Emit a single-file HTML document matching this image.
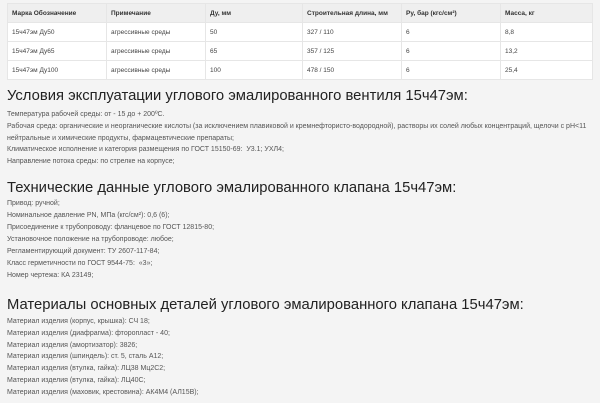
<!DOCTYPE html>
<html><head><meta charset="utf-8"><style>
body{margin:0;width:600px;height:403px;background:#f4f4f4;font-family:"Liberation Sans",sans-serif;overflow:hidden;position:relative}
table{position:absolute;left:7px;top:3px;width:586px;border-collapse:collapse;font-size:6.5px;color:#444}
td,th{border:1px solid #e6e6e6;height:18px;padding:0 0 0 4px;text-align:left;background:#fff}
th{background:#efefef;font-weight:bold;color:#333}
h2{position:absolute;left:7px;margin:0;font-weight:normal;font-size:14.8px;color:#222;white-space:nowrap}
.p{position:absolute;left:7px;font-size:7px;color:#555;white-space:nowrap}
</style></head><body>
<table>
<tr><th style="width:94px">Марка Обозначение</th><th style="width:94px">Примечание</th><th style="width:92px">Ду, мм</th><th style="width:94px">Строительная длина, мм</th><th style="width:94px">Ру, бар (кгс/см²)</th><th>Масса, кг</th></tr>
<tr><td>15ч47эм Ду50</td><td>агрессивные среды</td><td>50</td><td>327 / 110</td><td>6</td><td>8,8</td></tr>
<tr><td>15ч47эм Ду65</td><td>агрессивные среды</td><td>65</td><td>357 / 125</td><td>6</td><td>13,2</td></tr>
<tr><td>15ч47эм Ду100</td><td>агрессивные среды</td><td>100</td><td>478 / 150</td><td>6</td><td>25,4</td></tr>
</table>
<h2 style="top:88px">Условия эксплуатации углового эмалированного вентиля 15ч47эм:</h2>
<div class="p" style="top:111px">Температура рабочей среды: от - 15 до + 200ºС.</div>
<div class="p" style="top:123px">Рабочая среда: органические и неорганические кислоты (за исключением плавиковой и кремнефтористо-водородной), растворы их солей любых концентраций, щелочи с рН&lt;11</div>
<div class="p" style="top:135px">нейтральные и химические продукты, фармацевтические препараты;</div>
<div class="p" style="top:146px">Климатическое исполнение и категория размещения по ГОСТ 15150-69:&nbsp; У3.1; УХЛ4;</div>
<div class="p" style="top:158px">Направление потока среды: по стрелке на корпусе;</div>
<h2 style="top:180px">Технические данные углового эмалированного клапана 15ч47эм:</h2>
<div class="p" style="top:200px">Привод: ручной;</div>
<div class="p" style="top:212px">Номинальное давление PN, МПа (кгс/см²): 0,6 (6);</div>
<div class="p" style="top:224px">Присоединение к трубопроводу: фланцевое по ГОСТ 12815-80;</div>
<div class="p" style="top:236px">Установочное положение на трубопроводе: любое;</div>
<div class="p" style="top:248px">Регламентирующий документ: ТУ 2607-117-84;</div>
<div class="p" style="top:260px">Класс герметичности по ГОСТ 9544-75:&nbsp; «3»;</div>
<div class="p" style="top:272px">Номер чертежа: КА 23149;</div>
<h2 style="top:297px">Материалы основных деталей углового эмалированного клапана 15ч47эм:</h2>
<div class="p" style="top:318px">Материал изделия (корпус, крышка): СЧ 18;</div>
<div class="p" style="top:330px">Материал изделия (диафрагма): фторопласт - 40;</div>
<div class="p" style="top:342px">Материал изделия (амортизатор): 3826;</div>
<div class="p" style="top:353px">Материал изделия (шпиндель): ст. 5, сталь А12;</div>
<div class="p" style="top:365px">Материал изделия (втулка, гайка): ЛЦ38 Мц2С2;</div>
<div class="p" style="top:377px">Материал изделия (втулка, гайка): ЛЦ40С;</div>
<div class="p" style="top:389px">Материал изделия (маховик, крестовина): АК4М4 (АЛ15В);</div>
</body></html>
